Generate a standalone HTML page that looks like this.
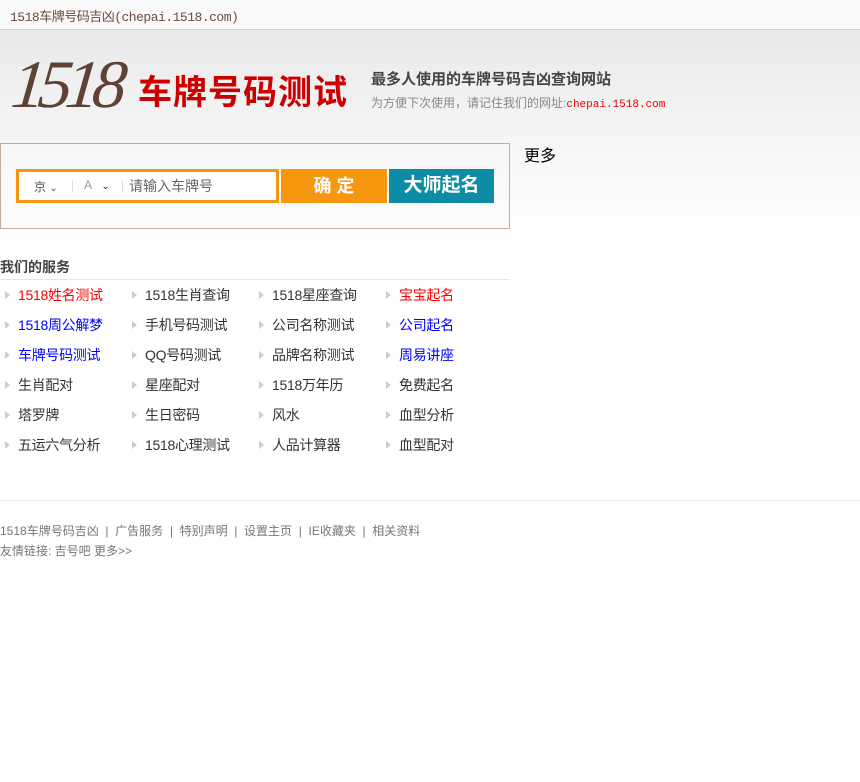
<!DOCTYPE html>
<html><head><meta charset="utf-8"><style>
*{margin:0;padding:0;box-sizing:border-box}
body{width:860px;height:782px;background:#fff;font-family:"Liberation Sans","Noto Sans CJK SC",sans-serif;font-size:14px;color:#333;position:relative;overflow:hidden}
.abs{position:absolute;white-space:nowrap}
#bar{position:absolute;left:0;top:0;width:860px;height:30px;background:#fafafa;border-bottom:1px solid #d8cfc8}
#hd{position:absolute;left:0;top:30px;width:860px;height:210px;background:linear-gradient(#e9e9e9,#f3f3f3 40%,#fff)}
.li{position:absolute;font-size:14px;line-height:16px;letter-spacing:-0.3px}
.li:before{content:"";position:absolute;left:-13px;top:4px;border-left:5px solid #ccc;border-top:4px solid transparent;border-bottom:4px solid transparent}
</style></head><body>
<div id="bar"></div>
<div class="abs" style="left:10px;top:6px;font-size:13px;color:#6b4a3a;font-family:'Liberation Mono','Noto Sans CJK SC',monospace;letter-spacing:-0.5px">1518车牌号码吉凶(chepai.1518.com)</div>
<div id="hd"></div>
<div class="abs" style="left:12px;top:44px;font-size:68px;font-style:italic;color:#5e4236;font-family:'Liberation Serif',serif;letter-spacing:-7px;line-height:80px;transform:skewX(-6deg)">1518</div>
<div class="abs" style="left:138px;top:73px;font-size:34px;font-weight:bold;color:#cc0000;line-height:40px;letter-spacing:1px">车牌号码测试</div>
<div class="abs" style="left:371px;top:68px;font-size:15px;font-weight:bold;color:#444">最多人使用的车牌号码吉凶查询网站</div>
<div class="abs" style="left:371px;top:94px;font-size:12px;color:#888">为方便下次使用，请记住我们的网址:<span style="color:#e00;font-family:'Liberation Mono',monospace;font-size:11px">chepai.1518.com</span></div>
<div class="abs" style="left:0;top:143px;width:510px;height:86px;border:1px solid #c8a898;background:linear-gradient(#f6f6f6,#fdfdfd)"></div>
<div class="abs" style="left:16px;top:169px;width:263px;height:34px;border:3px solid #f7960f;background:#fff"></div>
<div class="abs" style="left:34px;top:178px;font-size:12px;color:#555">京 <span style="font-size:10px">⌄</span></div>
<div class="abs" style="left:72px;top:180px;width:1px;height:12px;background:#ddd"></div>
<div class="abs" style="left:84px;top:178px;font-size:12px;color:#999">A &nbsp; <span style="color:#333;font-size:10px">⌄</span></div>
<div class="abs" style="left:122px;top:180px;width:1px;height:12px;background:#ddd"></div>
<div class="abs" style="left:129px;top:176px;font-size:14px;color:#666">请输入车牌号</div>
<div class="abs" style="left:281px;top:169px;width:106px;height:34px;background:#f7960f;color:#fff;font-size:18px;font-weight:bold;text-align:center;line-height:34px">确 定</div>
<div class="abs" style="left:389px;top:169px;width:105px;height:34px;background:#0f8ca5;color:#fff;font-size:19px;font-weight:bold;text-align:center;line-height:34px">大师起名</div>
<div class="abs" style="left:524px;top:142px;font-size:16px;color:#000">更多</div>
<div class="abs" style="left:0;top:257px;font-size:14px;font-weight:bold;color:#444">我们的服务</div>
<div class="abs" style="left:0;top:279px;width:509px;height:1px;background:#e5e5e5"></div>
<div class="li" style="left:18px;top:287px;color:#f00">1518姓名测试</div>
<div class="li" style="left:145px;top:287px">1518生肖查询</div>
<div class="li" style="left:272px;top:287px">1518星座查询</div>
<div class="li" style="left:399px;top:287px;color:#f00">宝宝起名</div>
<div class="li" style="left:18px;top:317px;color:#00f">1518周公解梦</div>
<div class="li" style="left:145px;top:317px">手机号码测试</div>
<div class="li" style="left:272px;top:317px">公司名称测试</div>
<div class="li" style="left:399px;top:317px;color:#00f">公司起名</div>
<div class="li" style="left:18px;top:347px;color:#00f">车牌号码测试</div>
<div class="li" style="left:145px;top:347px">QQ号码测试</div>
<div class="li" style="left:272px;top:347px">品牌名称测试</div>
<div class="li" style="left:399px;top:347px;color:#00f">周易讲座</div>
<div class="li" style="left:18px;top:377px">生肖配对</div>
<div class="li" style="left:145px;top:377px">星座配对</div>
<div class="li" style="left:272px;top:377px">1518万年历</div>
<div class="li" style="left:399px;top:377px">免费起名</div>
<div class="li" style="left:18px;top:407px">塔罗牌</div>
<div class="li" style="left:145px;top:407px">生日密码</div>
<div class="li" style="left:272px;top:407px">风水</div>
<div class="li" style="left:399px;top:407px">血型分析</div>
<div class="li" style="left:18px;top:437px">五运六气分析</div>
<div class="li" style="left:145px;top:437px">1518心理测试</div>
<div class="li" style="left:272px;top:437px">人品计算器</div>
<div class="li" style="left:399px;top:437px">血型配对</div>
<div class="abs" style="left:0;top:500px;width:860px;height:1px;background:#e5e5e5"></div>
<div class="abs" style="left:0;top:522px;font-size:12px;color:#777">1518车牌号码吉凶 &nbsp;|&nbsp; 广告服务 &nbsp;|&nbsp; 特别声明 &nbsp;|&nbsp; 设置主页 &nbsp;|&nbsp; IE收藏夹 &nbsp;|&nbsp; 相关资料</div>
<div class="abs" style="left:0;top:542px;font-size:12px;color:#777">友情链接: 吉号吧 更多&gt;&gt;</div>
</body></html>
